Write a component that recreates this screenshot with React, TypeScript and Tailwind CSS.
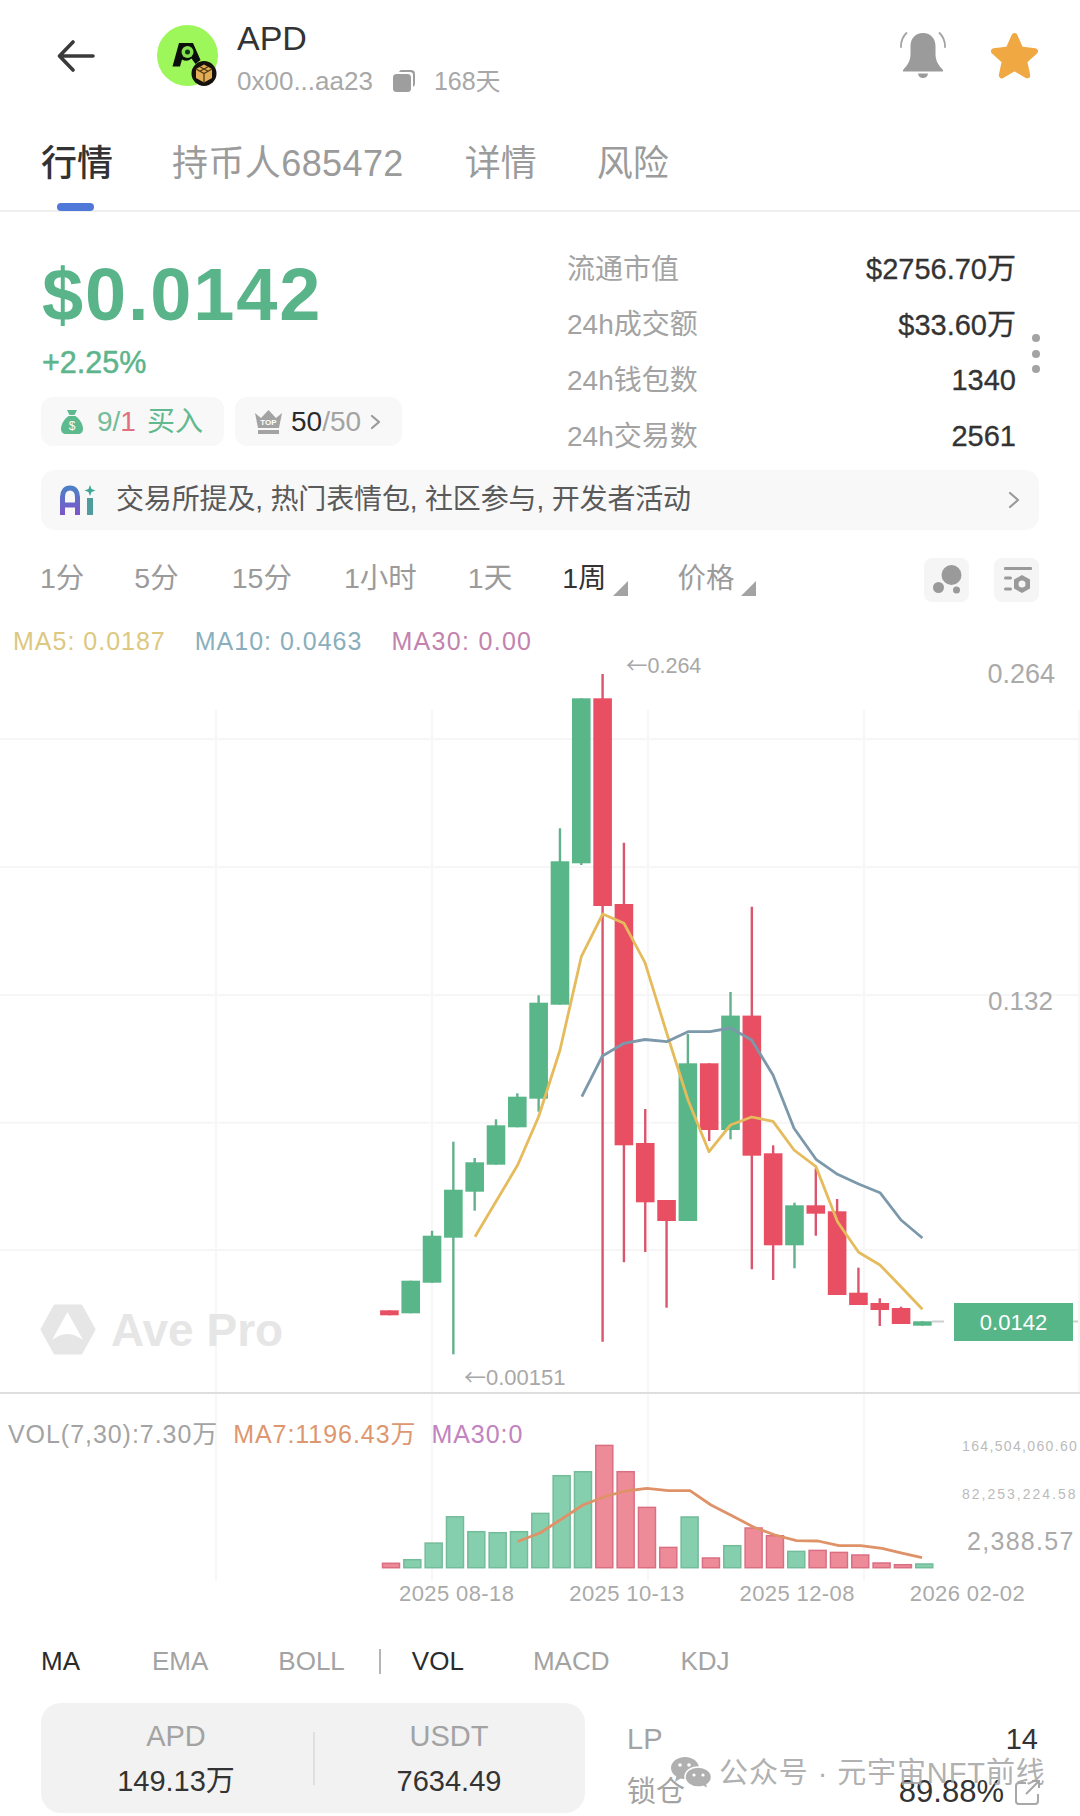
import React from 'react';

type Candle = { up: boolean; top: number; bottom: number; hi?: number; lo?: number };

// y values are page coordinates, the svg viewBoxes below start at the panel's page offset
const candles: Candle[] = [
  { up: false, top: 1310.3, bottom: 1315.3 },
  { up: true, top: 1280.7, bottom: 1313.3 },
  { up: true, top: 1235.7, bottom: 1282.7, hi: 1230.7 },
  { up: true, top: 1189.7, bottom: 1237.7, hi: 1141.7, lo: 1354.3 },
  { up: true, top: 1162.3, bottom: 1191.7, hi: 1158, lo: 1210.7 },
  { up: true, top: 1125.3, bottom: 1164.7, hi: 1119.3 },
  { up: true, top: 1096.7, bottom: 1127.3, hi: 1093.3 },
  { up: true, top: 1002.7, bottom: 1098.7, hi: 995.3, lo: 1111.7 },
  { up: true, top: 861.3, bottom: 1004.7, hi: 828.3 },
  { up: true, top: 698.3, bottom: 863.3, lo: 865 },
  { up: false, top: 698.3, bottom: 906, hi: 674, lo: 1341.7 },
  { up: false, top: 904, bottom: 1145.3, hi: 842.7, lo: 1262.3 },
  { up: false, top: 1143, bottom: 1202.3, hi: 1109, lo: 1252 },
  { up: false, top: 1200, bottom: 1221, lo: 1307.7 },
  { up: true, top: 1063.3, bottom: 1221, hi: 1034 },
  { up: false, top: 1063.3, bottom: 1130, lo: 1141 },
  { up: true, top: 1015.6, bottom: 1130, hi: 992, lo: 1139.3 },
  { up: false, top: 1015.6, bottom: 1155.7, hi: 906.7, lo: 1269.3 },
  { up: false, top: 1153.3, bottom: 1245.3, hi: 1145.3, lo: 1280 },
  { up: true, top: 1205.3, bottom: 1245.3, hi: 1202.7, lo: 1268.3 },
  { up: false, top: 1205.3, bottom: 1213.7, hi: 1168.3, lo: 1235.7 },
  { up: false, top: 1211.3, bottom: 1295, hi: 1199 },
  { up: false, top: 1292.7, bottom: 1305, hi: 1267.7 },
  { up: false, top: 1303, bottom: 1310, hi: 1298.3, lo: 1326 },
  { up: false, top: 1308, bottom: 1324, hi: 1306.7 },
  { up: true, top: 1321.3, bottom: 1325.7 },
];

const volumes = [
  4.4, 8, 24.6, 50.9, 36, 35, 36, 54.3, 92, 96, 122.3, 96, 60.3, 20.3, 50.7, 9.7, 22, 39.7, 32, 16.3, 17.3, 15.3, 12.7,
  4.7, 3, 3.7,
];

const ma5 =
  '475,1236.7 517.7,1165 538.6,1116.7 560,1050 581.3,956.7 602.7,914 624,923.3 645,962.7 666.7,1033 688,1100 709,1151.7 730.5,1125 751.6,1117 773,1121.3 794,1150 816,1166.7 837.5,1221.7 858.6,1252.3 880,1265 901,1286.7 922.4,1309.3';
const ma10 =
  '581.8,1096.7 602.4,1056 624,1043.3 645,1039.5 666.7,1041.7 688,1031.7 710,1031.7 730.5,1028 751.6,1040 773,1075 794,1128.3 816,1159.3 837.5,1174.3 858.6,1184 880,1192.7 901,1220 922.4,1238';
const ma7 =
  '517.6,1541.5 540,1533 561.7,1519 583,1505 604.4,1496.7 625.7,1491 647,1488.3 668.4,1490.7 690,1490.7 711,1505 732.5,1516 754,1527.3 775,1535 796.5,1540.7 818,1541 839,1545.7 860.6,1545.7 882,1548.3 903,1553.3 922,1557.7';

const gridX = [216, 432, 648, 864];
const gridY = [739, 867, 995, 1122.7, 1250];

const stats = [
  { label: '流通市值', value: '$2756.70万' },
  { label: '24h成交额', value: '$33.60万' },
  { label: '24h钱包数', value: '1340' },
  { label: '24h交易数', value: '2561' },
];

const periods = [
  { label: '1分', cls: 'ml-0' },
  { label: '5分', cls: 'ml-[50px]' },
  { label: '15分', cls: 'ml-[53px]' },
  { label: '1小时', cls: 'ml-[52px]' },
  { label: '1天', cls: 'ml-[51px]' },
];

function Corner() {
  return <span className="ml-[6px] mt-[16px] h-0 w-0 border-b-[15px] border-l-[15px] border-b-[#a3a3a3] border-l-transparent" />;
}

function ArrowLabel({ value }: { value: string }) {
  return (
    <>
      <span className="[font-family:'Noto_Sans_CJK_SC',sans-serif]">←</span>
      {value}
    </>
  );
}

function Avatar() {
  return (
    <svg width="61" height="61" viewBox="0 0 61 61" className="shrink-0">
      <circle cx="30.5" cy="30.5" r="30.5" fill="#9df65a" />
      <path d="M22 18h14l7.500 17-5 4-4-5.500a8 8 0 0 1-9.500 1l-2 7h-7.500z" fill="#0b0f0b" />
      <circle cx="30.5" cy="27" r="6" fill="#86e04f" />
      <circle cx="30.5" cy="27" r="2.500" fill="#0c3a14" />
      <circle cx="47" cy="48.5" r="12.5" fill="#15120c" />
      <path d="M47 39.500l8 4.500v9l-8 4.500-8-4.500v-9z" fill="#e2ad55" />
      <path d="M39 44l8 4.500 8-4.500M47 48.500v9M43 41.800l8 4.500M51 41.800l-8 4.500" stroke="#4c3510" strokeWidth="1.200" fill="none" />
    </svg>
  );
}

function Bell() {
  return (
    <svg width="46" height="47" viewBox="0 0 46 47" fill="none">
      <path d="M23 1c-8 0-12.500 6-12.500 13v8c0 6-2.500 11-7.500 16v1.500h40V38c-5-5-7.500-10-7.500-16v-8C35.500 7 31 1 23 1z" fill="#9b9b9b" />
      <path d="M18 41.500h10c-.4 3-2.400 4.500-5 4.500s-4.600-1.500-5-4.500z" fill="#9b9b9b" />
      <path d="M6.500 1C2.500 4.800.8 9 1 15M39.500 1c4 3.800 5.700 8 5.500 14" stroke="#a3a3a3" strokeWidth="1.800" strokeLinecap="round" />
    </svg>
  );
}

function CandleChart() {
  return (
    <svg width="1080" height="730" viewBox="0 662 1080 730" className="absolute left-0 top-0">
      {gridY.map((y) => (
        <line key={y} x1="0" x2="1080" y1={y} y2={y} stroke="#f6f6f6" strokeWidth="2" />
      ))}
      {gridX.map((x) => (
        <line key={x} x1={x} x2={x} y1="710" y2="1392" stroke="#f7f7f7" strokeWidth="2" />
      ))}
      <line x1="1079" x2="1079" y1="710" y2="1392" stroke="#f7f7f7" strokeWidth="2" />
      {candles.map((c, i) => {
        const x = 389.4 + 21.32 * i;
        const color = c.up ? '#58b688' : '#e84f62';
        const wick = c.up ? '#62b18c' : '#d9566e';
        return (
          <g key={i}>
            <line x1={x} x2={x} y1={c.hi ?? c.top} y2={c.lo ?? c.bottom} stroke={wick} strokeWidth="2.400" />
            <rect x={x - 9.300} y={c.top} width="18.600" height={c.bottom - c.top} fill={color} />
          </g>
        );
      })}
      <polyline points={ma5} fill="none" stroke="#e5bb5c" strokeWidth="2.800" strokeLinejoin="round" />
      <polyline points={ma10} fill="none" stroke="#7c98ab" strokeWidth="2.800" strokeLinejoin="round" />
      <line x1="932" x2="950" y1="1321.500" y2="1321.500" stroke="#cfcfcf" strokeWidth="2" strokeDasharray="12 6" />
      <line x1="1073" x2="1078" y1="1321.500" y2="1321.500" stroke="#cfcfcf" strokeWidth="2" />
    </svg>
  );
}

function VolumeChart() {
  return (
    <svg width="1080" height="184" viewBox="0 1394 1080 184" className="absolute left-0 top-0 overflow-visible">
      {gridX.map((x) => (
        <line key={x} x1={x} x2={x} y1="1394" y2="1581" stroke="#f7f7f7" strokeWidth="2" />
      ))}
      {volumes.map((h, i) => {
        const x = 391 + 21.33 * i;
        const up = candles[i].up;
        return (
          <rect
            key={i}
            x={x - 8.500}
            y={1567.700 - h}
            width="17"
            height={h}
            fill={up ? '#86cfae' : '#ee8b99'}
            stroke={up ? '#74bb9a' : '#d96f82'}
            strokeWidth="1.500"
          />
        );
      })}
      <polyline points={ma7} fill="none" stroke="#df9267" strokeWidth="2.800" strokeLinejoin="round" />
    </svg>
  );
}

export default function App() {
  return (
    <div className="relative h-[1816px] w-[1080px] overflow-hidden bg-white text-[#333] [font-family:'Liberation_Sans','Noto_Sans_CJK_SC',sans-serif]">
      {/* Header */}
      <div className="flex h-[115px] items-start">
        <svg width="38" height="32" viewBox="0 0 38 32" fill="none" className="ml-[57px] mt-[40px] shrink-0">
          <path d="M36 16H3M16 2L2.500 16 16 30" stroke="#3a3a3a" strokeWidth="3.600" strokeLinecap="round" strokeLinejoin="round" />
        </svg>
        <div className="ml-[62px] mt-[25px]">
          <Avatar />
        </div>
        <div className="ml-[19px] mt-[18px] flex flex-col">
          <span className="h-[40px] text-[34px] leading-[40px]">APD</span>
          <div className="mt-[7px] flex h-[32px] items-center text-[26px] leading-[32px] text-[#a8a8a8]">
            <span>0x00...aa23</span>
            <svg width="22" height="22" viewBox="0 0 22 22" className="ml-[20px]">
              <path d="M8 0h10a4 4 0 0 1 4 4v10a4 4 0 0 1-2 3V5a3 3 0 0 0-3-3H6a4 4 0 0 1 2-2z" fill="#9e9e9e" />
              <rect x="0" y="4" width="18" height="18" rx="3.500" fill="#9e9e9e" />
            </svg>
            <span className="ml-[19px] text-[25px]">168天</span>
          </div>
        </div>
        <div className="ml-auto mr-[42px] mt-[32px] flex items-start gap-[45px]">
          <Bell />
          <svg width="47" height="47" viewBox="0 0 47 47">
            <path
              d="M23.500 4l6 13.500 14.500 1.700-10.800 9.800 3 14.300-12.700-7.300-12.700 7.300 3-14.300L3 19.200l14.500-1.700z"
              fill="#f0a843"
              stroke="#f0a843"
              strokeWidth="6"
              strokeLinejoin="round"
            />
          </svg>
        </div>
      </div>

      {/* Tabs */}
      <div className="relative flex h-[97px] items-start border-b-2 border-[#f0f0f0] pl-[41px] pt-[27px] text-[36px] leading-[44px] text-[#9b9b9b]">
        <span className="font-medium text-[#333]">行情</span>
        <span className="ml-[59px] tracking-[0.400px]">持币人685472</span>
        <span className="ml-[61px]">详情</span>
        <span className="ml-[60px]">风险</span>
        <span className="absolute bottom-[-1px] left-[57px] h-[8px] w-[37px] rounded-full bg-[#4f78d8]" />
      </div>

      {/* Price and stats */}
      <div className="flex h-[258px] pl-[41px]">
        <div className="w-[526px] pt-[47px]">
          <div className="ml-[1px] h-[72px] text-[74px] font-bold leading-[72px] tracking-[1.800px] text-[#59b489]">$0.0142</div>
          <div className="ml-[1px] mt-[13px] h-[36px] text-[30.500px] leading-[36px] text-[#5cb58c] [-webkit-text-stroke:0.5px_#5cb58c]">+2.25%</div>
          <div className="mt-[17px] flex gap-[11px]">
            <div className="flex h-[49px] w-[183px] items-center rounded-[12px] bg-[#f8f8f8] pl-[20px] text-[28px]">
              <svg width="22" height="24" viewBox="0 0 22 24">
                <path d="M6 0h10l-2.500 5h-5z" fill="#5cba8e" />
                <path d="M7.500 6h7c4 3 7.500 8 7.500 13 0 3-2 5-5 5H5c-3 0-5-2-5-5 0-5 3.500-10 7.500-13z" fill="#5cba8e" />
                <text x="11" y="20" textAnchor="middle" fontSize="12" fill="#fff">$</text>
              </svg>
              <span className="ml-[14px] text-[#74bc9a]">9/</span>
              <span className="text-[#e0707f]">1</span>
              <span className="ml-[11px] text-[#62b98f]">买入</span>
            </div>
            <div className="flex h-[49px] w-[167px] items-center rounded-[12px] bg-[#f8f8f8] pl-[20px] text-[28px]">
              <svg width="27" height="24" viewBox="0 0 27 24">
                <path d="M0 3l6 5 7.500-8L21 8l6-5-3 15H3z" fill="#a3a3a3" />
                <rect x="3" y="20" width="21" height="4" fill="#a3a3a3" />
                <text x="13.500" y="15" textAnchor="middle" fontSize="8" fontWeight="700" fill="#fff">TOP</text>
              </svg>
              <span className="ml-[9px] text-[#2b2b2b]">50</span>
              <span className="text-[#a3a3a3]">/50</span>
              <svg width="11" height="16" viewBox="0 0 11 16" fill="none" className="ml-[9px]">
                <path d="M2 2l7 6-7 6" stroke="#9a9a9a" strokeWidth="2.200" strokeLinecap="round" strokeLinejoin="round" />
              </svg>
            </div>
          </div>
        </div>
        <div className="w-[449px] pt-[30px] text-[28px]">
          {stats.map((s) => (
            <div key={s.label} className="flex h-[55.600px] items-center justify-between">
              <span className="text-[#a3a3a3]">{s.label}</span>
              <span className="text-[29px] text-[#333] [-webkit-text-stroke:0.3px_#333]">{s.value}</span>
            </div>
          ))}
        </div>
        <div className="ml-[16px] mt-[122px] flex w-[8px] flex-col gap-[7.500px]">
          <span className="h-[8px] w-[8px] rounded-full bg-[#a3a3a3]" />
          <span className="h-[8px] w-[8px] rounded-full bg-[#a3a3a3]" />
          <span className="h-[8px] w-[8px] rounded-full bg-[#a3a3a3]" />
        </div>
      </div>

      {/* AI summary */}
      <div className="ml-[41px] flex h-[60px] w-[998px] items-center rounded-[14px] bg-[#f8f8f8] pl-[19px] pr-[19px]">
        <svg width="36" height="32" viewBox="0 0 36 32" fill="none" className="shrink-0">
          <defs>
            <linearGradient id="ai-a" x1="0" y1="0" x2="0" y2="1">
              <stop offset="0" stopColor="#4d7fc7" />
              <stop offset="1" stopColor="#7d55c9" />
            </linearGradient>
          </defs>
          <path d="M2.500 31V13c0-5.500 3-9 7.500-9s7.500 3.500 7.500 9v18M2.500 21h15" stroke="url(#ai-a)" strokeWidth="5" />
          <rect x="27" y="14" width="6" height="17" fill="#4f9c9c" />
          <path d="M30 1l1.500 4 4 1.500-4 1.500-1.500 4-1.500-4-4-1.500 4-1.500z" fill="#3fa796" />
        </svg>
        <span className="ml-[20px] text-[28px] leading-none tracking-[-0.150px] text-[#5a5a5a]">交易所提及, 热门表情包, 社区参与, 开发者活动</span>
        <svg width="12" height="18" viewBox="0 0 12 18" fill="none" className="ml-auto">
          <path d="M2 2l8 7-8 7" stroke="#9a9a9a" strokeWidth="2.200" strokeLinecap="round" strokeLinejoin="round" />
        </svg>
      </div>

      {/* Periods */}
      <div className="mt-[28px] flex h-[44px] items-center pl-[40px] text-[28.500px] text-[#9b9b9b]">
        {periods.map((p) => (
          <span key={p.label} className={`${p.cls} mt-[-3px]`}>
            {p.label}
          </span>
        ))}
        <span className="ml-[50px] mt-[-3px] text-[#333]">1周</span>
        <Corner />
        <span className="ml-[50px] mt-[-3px]">价格</span>
        <Corner />
        <div className="ml-auto mr-[41px] flex gap-[25px]">
          <div className="h-[44px] w-[45px] rounded-[8px] bg-[#f5f5f5]">
            <svg width="45" height="44" viewBox="0 0 45 44">
              <circle cx="27.500" cy="17" r="10" fill="#9a9a9a" />
              <circle cx="14.500" cy="29.500" r="5.500" fill="#9a9a9a" />
              <circle cx="32.500" cy="32" r="3.500" fill="#9a9a9a" />
            </svg>
          </div>
          <div className="h-[44px] w-[45px] rounded-[8px] bg-[#f5f5f5]">
            <svg width="45" height="44" viewBox="0 0 45 44">
              <rect x="10" y="9" width="28" height="3" rx="1" fill="#9a9a9a" />
              <rect x="10" y="18.500" width="8" height="3" rx="1.500" fill="#9a9a9a" />
              <rect x="10" y="29.500" width="8" height="3" rx="1.500" fill="#9a9a9a" />
              <path d="M28 17l8 4.500v9L28 35l-8-4.500v-9z" fill="#9a9a9a" />
              <circle cx="28" cy="26" r="3.500" fill="#f5f5f5" />
            </svg>
          </div>
        </div>
      </div>

      {/* MA legend */}
      <div className="mt-[20px] flex h-[40px] items-center pl-[13px] text-[25px] tracking-[1px]">
        <span className="text-[#dcc87e]">MA5: 0.0187</span>
        <span className="ml-[29px] text-[#8aaebb]">MA10: 0.0463</span>
        <span className="ml-[29px] tracking-[1.300px] text-[#c283ae]">MA30: 0.00</span>
      </div>

      {/* Candles */}
      <div className="relative h-[732px] border-b-2 border-[#dedede]">
        <CandleChart />
        <div className="absolute left-[40px] top-[642px] flex items-center">
          <svg width="56" height="51" viewBox="0 0 56 51">
            <path d="M15 2h26l13 23.500L41 49H15L2 25.500z" fill="#e6e6e6" stroke="#e6e6e6" strokeWidth="3" strokeLinejoin="round" />
            <path d="M27.500 8L43 36Q27.500 24 12 36z" fill="#fff" />
          </svg>
          <span className="ml-[15px] text-[46px] font-bold leading-none text-[#e6e6e6]">Ave Pro</span>
        </div>
        <span className="absolute left-[626px] top-[3px] -translate-y-1/2 text-[21.500px] text-[#a8a8a8]">
          <ArrowLabel value="0.264" />
        </span>
        <span className="absolute right-[25px] top-[12px] -translate-y-1/2 text-[27px] text-[#aaa]">0.264</span>
        <span className="absolute right-[27px] top-[339px] -translate-y-1/2 text-[26px] text-[#aaa]">0.132</span>
        <span className="absolute left-[464px] top-[714px] -translate-y-1/2 text-[22px] text-[#a8a8a8]">
          <ArrowLabel value="0.00151" />
        </span>
        <div className="absolute left-[954px] top-[641px] flex h-[38px] w-[119px] items-center justify-center bg-[#57b688] text-[22px] text-white">
          0.0142
        </div>
      </div>

      {/* Volume */}
      <div className="relative h-[184px]">
        <VolumeChart />
        <div className="relative flex h-[80px] items-center pl-[8px] pt-[2px] text-[25px] tracking-[0.950px]">
          <span className="text-[#a3a3a3]">VOL(7,30):7.30万</span>
          <span className="ml-[15px] text-[#dd9770]">MA7:1196.43万</span>
          <span className="ml-[15px] text-[#c283c0]">MA30:0</span>
        </div>
        <span className="absolute left-[962px] top-[52px] -translate-y-1/2 text-[14px] tracking-[1.350px] text-[#bbb]">164,504,060.60</span>
        <span className="absolute left-[962px] top-[100px] -translate-y-1/2 text-[14px] tracking-[2px] text-[#bbb]">82,253,224.58</span>
        <span className="absolute left-[967px] top-[148px] -translate-y-1/2 text-[25px] tracking-[1.300px] text-[#aaa]">2,388.57</span>
      </div>

      {/* Dates */}
      <div className="flex h-[30px] items-center pl-[399px] text-[22px] tracking-[0.400px] text-[#aaa]">
        <span className="w-[170.700px]">2025 08-18</span>
        <span className="w-[170.700px]">2025 10-13</span>
        <span className="w-[170.700px]">2025 12-08</span>
        <span className="w-[170.700px]">2026 02-02</span>
      </div>

      {/* Indicators */}
      <div className="mt-[33px] flex h-[40px] items-center pl-[41px] text-[26px] text-[#a3a3a3]">
        <span className="text-[#2b2b2b]">MA</span>
        <span className="ml-[72px]">EMA</span>
        <span className="ml-[70px]">BOLL</span>
        <span className="ml-[34px] h-[25px] w-[2px] bg-[#b5b5b5]" />
        <span className="ml-[31px] text-[#2b2b2b]">VOL</span>
        <span className="ml-[69px]">MACD</span>
        <span className="ml-[71px]">KDJ</span>
      </div>

      {/* Pool */}
      <div className="ml-[41px] mt-[22px] flex h-[110px] text-[29px]">
        <div className="flex w-[544px] items-center rounded-[20px] bg-[#f2f2f2]">
          <div className="flex w-[270px] flex-col items-center gap-[12px] pt-[2px] leading-[33px]">
            <span className="text-[#a3a3a3]">APD</span>
            <span className="text-[#333]">149.13万</span>
          </div>
          <span className="ml-[2px] h-[53px] w-[2px] bg-[#dfdfdf]" />
          <div className="flex w-[268px] flex-col items-center gap-[12px] pt-[2px] leading-[33px]">
            <span className="text-[#a3a3a3]">USDT</span>
            <span className="text-[#333]">7634.49</span>
          </div>
        </div>
        <div className="ml-[42px] flex w-[411px] flex-col pt-[20px]">
          <div className="flex h-[33px] items-center justify-between">
            <span className="text-[#a3a3a3]">LP</span>
            <span>14</span>
          </div>
          <div className="mt-[20px] flex h-[33px] items-center">
            <span className="text-[#a3a3a3]">锁仓</span>
            <span className="ml-auto text-[31px]">89.88%</span>
            <svg width="25" height="25" viewBox="0 0 25 25" fill="none" className="ml-[11px] mr-[-2px]">
              <path d="M11 3H4a3 3 0 0 0-3 3v15a3 3 0 0 0 3 3h16a3 3 0 0 0 3-3v-7M11 14L24 1M17 1h7v7" stroke="#a8a8a8" strokeWidth="2" />
            </svg>
          </div>
        </div>
      </div>

      {/* WeChat watermark over the pool row */}
      <div className="absolute left-[671px] top-[1757px] flex items-center text-[29px] leading-none text-[#a6a6a6]/90">
        <svg width="41" height="32" viewBox="0 0 41 32">
          <path d="M14 0c8 0 14 5 14 11s-6 11-14 11c-1.500 0-3-.2-4.400-.6L4 25l1.300-5.500C2 17.500 0 14.500 0 11 0 5 6 0 14 0z" fill="#b0b0b0" />
          <path d="M27 10c7.500 0 13.500 4.500 13.500 10 0 3-1.800 5.800-4.500 7.600L37 32l-5-2.600c-1.500.4-3.200.6-5 .6-7.500 0-13-4.500-13-10s5.500-10 13-10z" fill="#b0b0b0" stroke="#fff" strokeWidth="1.500" />
          <circle cx="9" cy="8" r="1.800" fill="#fff" />
          <circle cx="18" cy="8" r="1.800" fill="#fff" />
          <circle cx="23" cy="18" r="1.600" fill="#fff" />
          <circle cx="32" cy="18" r="1.600" fill="#fff" />
        </svg>
        <span className="ml-[7px] whitespace-pre tracking-[0.900px]">公众号 · 元宇宙NFT前线</span>
      </div>
    </div>
  );
}
